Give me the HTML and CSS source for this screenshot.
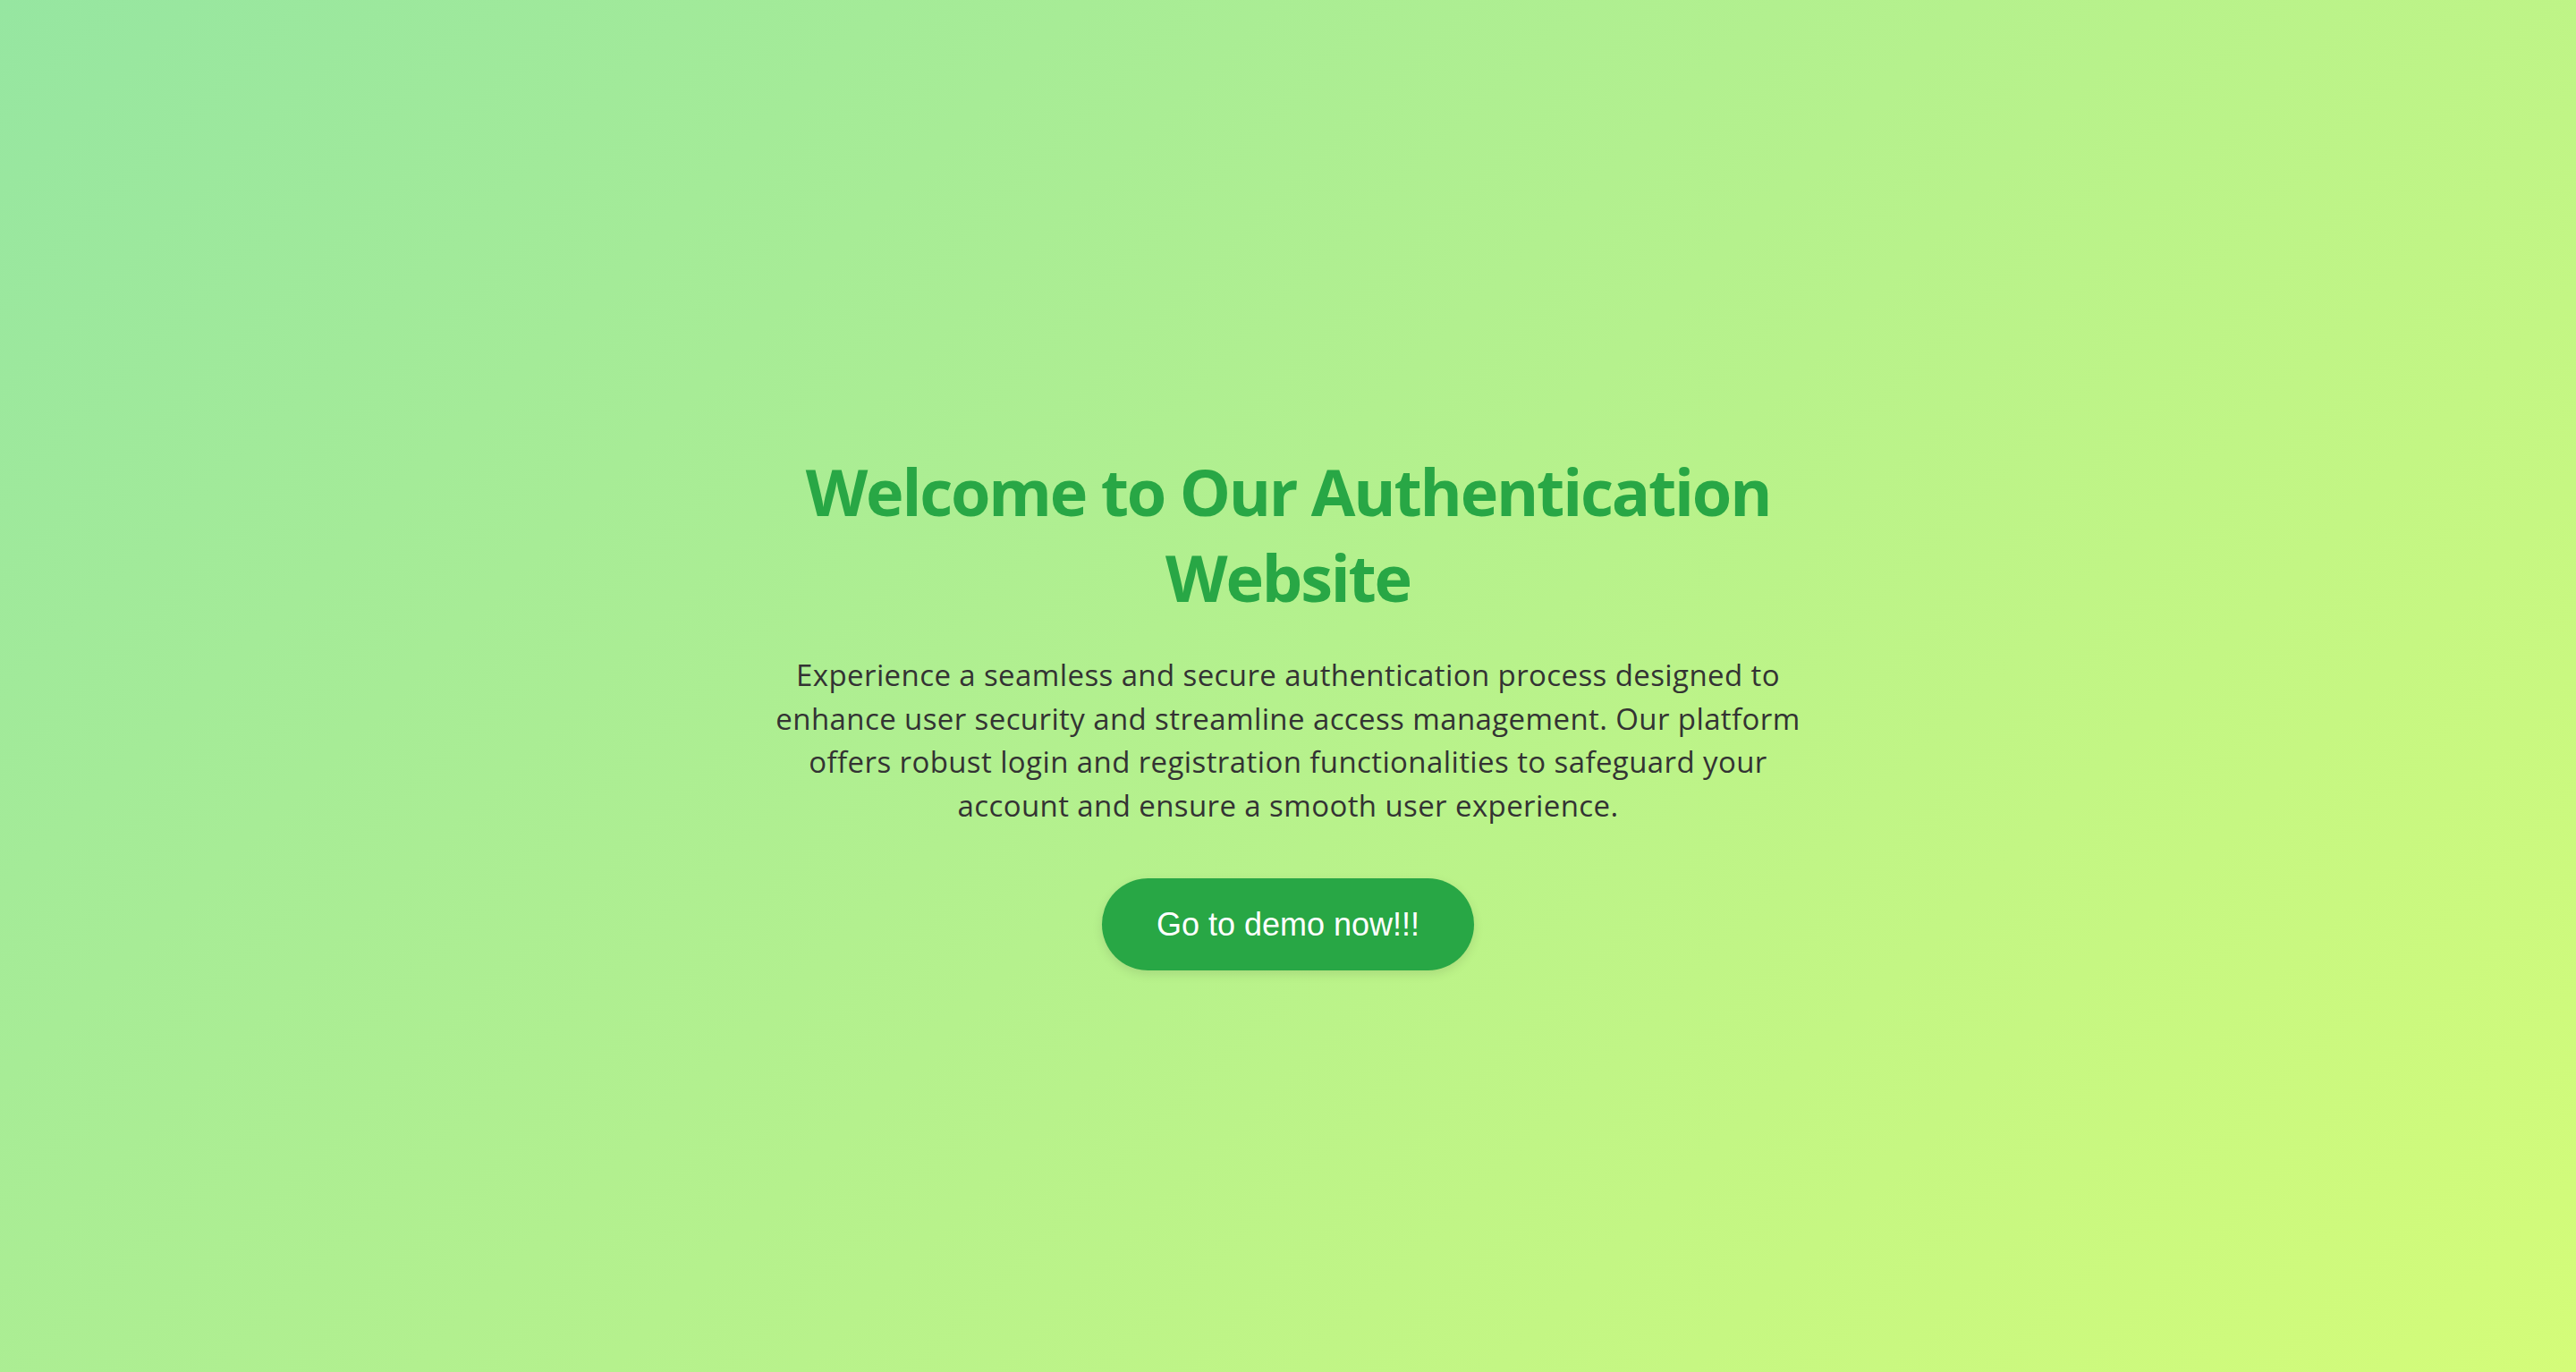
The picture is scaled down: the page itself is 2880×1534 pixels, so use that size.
FILE: index.html
```html
<!DOCTYPE html>
<html lang="en">
<head>
<meta charset="utf-8">
<title>Welcome to Our Authentication Website</title>
<link rel="stylesheet" href="styles.css">
</head>
<body>
<main class="hero">
  <section class="hero-content">
    <h1 class="hero-title">Welcome to Our Authentication Website</h1>
    <p class="hero-text">Experience a seamless and secure authentication process designed to enhance user security and streamline access management. Our platform offers robust login and registration functionalities to safeguard your account and ensure a smooth user experience.</p>
    <a class="hero-button" href="#">Go to demo now!!!</a>
  </section>
</main>
</body>
</html>
```
FILE: styles.css
```css
* { box-sizing: border-box; }
html, body { margin: 0; padding: 0; height: 100%; }
body {
  font-family: "Open Sans", "Noto Sans", sans-serif;
  background: linear-gradient(135deg, #96e6a1 0%, #d4fc79 100%);
  min-height: 100vh;
}
.hero {
  min-height: 100vh;
  display: flex;
  align-items: center;
  justify-content: center;
  padding-top: 52px;
}
.hero-content {
  width: 1180px;
  display: flex;
  flex-direction: column;
  align-items: center;
  text-align: center;
}
.hero-title {
  margin: 0;
  font-size: 72px;
  line-height: 96px;
  font-weight: 700;
  color: #28a745;
  width: 1100px;
  letter-spacing: -2.2px;
}
.hero-text {
  margin: 38px 0 0;
  font-size: 33px;
  line-height: 48.5px;
  color: #333;
  letter-spacing: 0.4px;
}
.hero-button {
  margin-top: 57px;
  display: inline-block;
  padding: 31px 61px;
  border-radius: 60px;
  background: #28a745;
  color: #fff;
  font-family: "Liberation Sans", Arial, sans-serif;
  font-size: 36px;
  line-height: 41px;
  text-decoration: none;
  box-shadow: 0 4px 12px rgba(0, 0, 0, 0.1);
}
```
